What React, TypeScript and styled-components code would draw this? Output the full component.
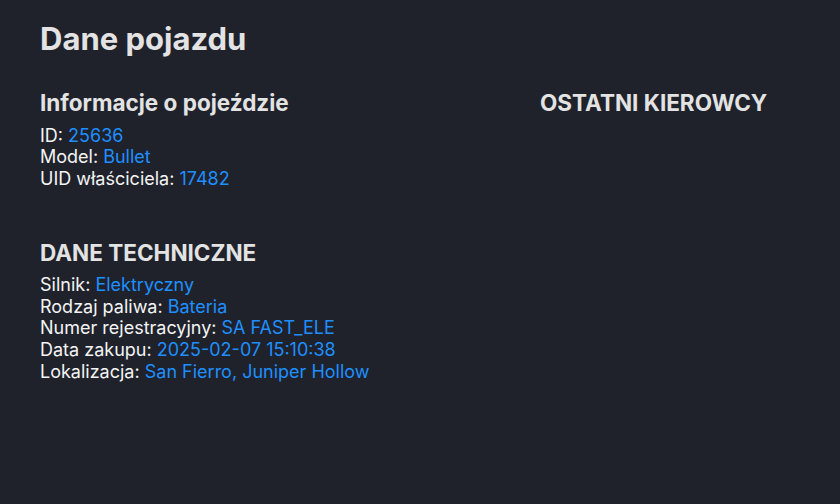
import React from "react";
import styled, { createGlobalStyle } from "styled-components";

const Global = createGlobalStyle`
  html, body { margin: 0; padding: 0; background: #1f222b; }
  body { font-family: Inter, "Noto Sans", sans-serif; }
`;

const Page = styled.div`
  width: 840px;
  height: 504px;
  box-sizing: border-box;
  padding: 20px 40px;
  background: #1f222b;
  color: #f2f2f2;
  font-size: 18px;
`;

const Title = styled.h1`
  margin: 0 0 31px;
  font-size: 31px;
  line-height: 38px;
  font-weight: 700;
  color: #e3e3e3;
`;

const Columns = styled.div`
  display: grid;
  grid-template-columns: 500px 1fr;
`;

const Column = styled.div`
  display: flex;
  flex-direction: column;
  gap: 49.5px;
`;

const Section = styled.section`
  display: flex;
  flex-direction: column;
`;

const Heading = styled.h2`
  margin: 0 0 7.5px;
  font-size: 22.5px;
  line-height: 28px;
  font-weight: 700;
  color: #e3e3e3;
`;

const Row = styled.div`
  font-size: 18px;
  line-height: 21.6px;
  font-weight: 400;
  color: #f4f4f4;
`;

const Value = styled.span`
  color: #1e8fff;
`;

const info = [
  ["ID", "25636"],
  ["Model", "Bullet"],
  ["UID właściciela", "17482"],
];

const tech = [
  ["Silnik", "Elektryczny"],
  ["Rodzaj paliwa", "Bateria"],
  ["Numer rejestracyjny", "SA FAST_ELE"],
  ["Data zakupu", "2025-02-07 15:10:38"],
  ["Lokalizacja", "San Fierro, Juniper Hollow"],
];

export default function App() {
  return (
    <>
      <Global />
      <Page>
        <Title>Dane pojazdu</Title>
        <Columns>
          <Column>
            <Section>
              <Heading>Informacje o pojeździe</Heading>
              {info.map(([k, v]) => (
                <Row key={k}>
                  {k}: <Value>{v}</Value>
                </Row>
              ))}
            </Section>
            <Section>
              <Heading>DANE TECHNICZNE</Heading>
              {tech.map(([k, v]) => (
                <Row key={k}>
                  {k}: <Value>{v}</Value>
                </Row>
              ))}
            </Section>
          </Column>
          <Column>
            <Section>
              <Heading>OSTATNI KIEROWCY</Heading>
            </Section>
          </Column>
        </Columns>
      </Page>
    </>
  );
}
